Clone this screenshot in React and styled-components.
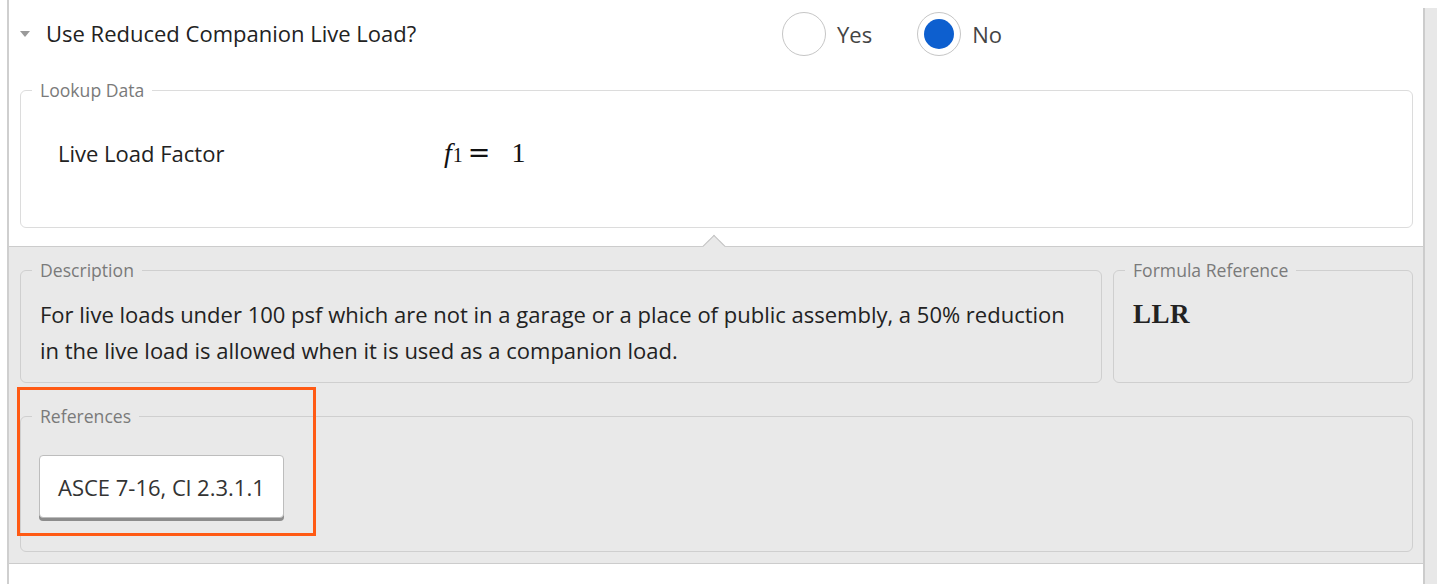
import React from "react";
import styled, { createGlobalStyle } from "styled-components";

const Global = createGlobalStyle`
  html, body { margin: 0; padding: 0; background: #fff; }
  body { font-family: "Open Sans", "Noto Sans", Arial, sans-serif; color: #222; }
  * { box-sizing: border-box; }
`;

const Page = styled.div`
  display: flex;
  align-items: flex-start;
  height: 584px;
  overflow: hidden;
`;

const Panel = styled.div`
  margin-left: 7px;
  width: 1416px;
  min-height: 584px;
  border-left: 2px solid #cfcfcf;
`;

const ScrollTrack = styled.div`
  margin-top: 8px;
  width: 14px;
  height: 576px;
  background: #e8e8e8;
  border-left: 2px solid #cccccc;
`;

const Header = styled.div`
  display: flex;
  align-items: center;
  height: 68px;
  padding-left: 11px;
`;

const Caret = styled.span`
  width: 0;
  height: 0;
  border-left: 5.5px solid transparent;
  border-right: 5.5px solid transparent;
  border-top: 6px solid #9a9a9a;
  margin-right: 16px;
`;

const Title = styled.div`
  font-size: 22px;
  width: 736px;
  color: #222;
  margin-top: -2px;
`;

const RadioGroup = styled.div`
  display: flex;
  align-items: center;
  gap: 45px;
`;

const RadioOption = styled.label`
  display: flex;
  align-items: center;
  gap: 11px;
  font-size: 22px;
  color: #444;
`;

const RadioCircle = styled.span`
  width: 44px;
  height: 44px;
  border-radius: 50%;
  border: 1px solid #c6c6c6;
  background: #fff;
  display: flex;
  align-items: center;
  justify-content: center;
  &::after {
    content: "";
    width: 30px;
    height: 30px;
    border-radius: 50%;
    background: ${(p) => (p.$checked ? "#0d5fcf" : "transparent")};
  }
`;

const WhiteBody = styled.div`
  padding: 11px 10px 18px 11px;
`;

const Fieldset = styled.fieldset`
  margin: 0;
  min-width: 0;
  border: 1px solid ${(p) => (p.$light ? "#dcdcdc" : "#cfcfcf")};
  border-radius: 6px;
  padding: ${(p) => p.$pad || "0 19px"};
`;

const Legend = styled.legend`
  font-size: 17.6px;
  line-height: 22px;
  color: #7a7a7a;
  padding: 0 8px;
  margin-left: -8px;
`;

const LookupRow = styled.div`
  display: flex;
  align-items: center;
  height: 44px;
  padding-left: 18px;
`;

const LookupLabel = styled.div`
  width: 386px;
  font-size: 22px;
  color: #222;
`;

const MathExpr = styled.div`
  font-family: "Liberation Serif", "DejaVu Serif", serif;
  font-size: 28px;
  color: #111;
  display: flex;
  align-items: baseline;
`;

const MathVar = styled.span`
  font-style: italic;
`;

const MathSub = styled.sub`
  font-size: 20px;
  vertical-align: -4px;
  margin-left: 1px;
`;

const MathEq = styled.span`
  font-family: "DejaVu Serif", serif;
  font-size: 27px;
  margin: 0 21px 0 5px;
`;

const GraySection = styled.div`
  position: relative;
  background: #e9e9e9;
  border-top: 1px solid #cccccc;
  border-bottom: 1px solid #cccccc;
  padding: 12px 10px 11px 11px;
  display: flex;
  flex-direction: column;
  gap: 22px;
  &::before {
    content: "";
    position: absolute;
    top: -9px;
    left: 697px;
    width: 15px;
    height: 15px;
    background: #e9e9e9;
    border-top: 1px solid #c4c4c4;
    border-left: 1px solid #c4c4c4;
    transform: rotate(45deg);
  }
`;

const InfoGrid = styled.div`
  display: grid;
  grid-template-columns: 1fr 300px;
  gap: 11px;
`;

const Description = styled.p`
  margin: 0;
  font-size: 22px;
  line-height: 36px;
  color: #222;
`;

const Code = styled.div`
  font-family: "Liberation Serif", "DejaVu Serif", serif;
  font-weight: bold;
  font-size: 27px;
  letter-spacing: 0.5px;
  line-height: 36px;
  color: #222;
`;

const RefButton = styled.button`
  font-family: inherit;
  font-size: 22px;
  color: #333;
  background: #fff;
  border: 1px solid #bdbdbd;
  border-radius: 4px;
  height: 63px;
  padding: 0 18px;
  box-shadow: 0 3px 0 #8c8c8c;
  cursor: pointer;
  margin-left: -1px;
`;

const Highlight = styled.div`
  position: absolute;
  left: 8px;
  top: 140px;
  width: 299px;
  height: 149px;
  border: 3px solid #ff5a14;
  pointer-events: none;
`;

export default function App() {
  return (
    <>
      <Global />
      <Page>
        <Panel>
          <Header>
            <Caret />
            <Title>Use Reduced Companion Live Load?</Title>
            <RadioGroup>
              <RadioOption>
                <RadioCircle />
                Yes
              </RadioOption>
              <RadioOption>
                <RadioCircle $checked />
                No
              </RadioOption>
            </RadioGroup>
          </Header>
          <WhiteBody>
            <Fieldset $light $pad="30px 19px 52px">
              <Legend>Lookup Data</Legend>
              <LookupRow>
                <LookupLabel>Live Load Factor</LookupLabel>
                <MathExpr>
                  <MathVar>f</MathVar>
                  <MathSub>1</MathSub>
                  <MathEq>=</MathEq>
                  <span>1</span>
                </MathExpr>
              </LookupRow>
            </Fieldset>
          </WhiteBody>
          <GraySection>
            <InfoGrid>
              <Fieldset $pad="15px 19px 14px">
                <Legend>Description</Legend>
                <Description>
                  For live loads under 100 psf which are not in a garage or a place of public
                  assembly, a 50% reduction in the live load is allowed when it is used as a
                  companion load.
                </Description>
              </Fieldset>
              <Fieldset $pad="15px 19px 14px">
                <Legend>Formula Reference</Legend>
                <Code>LLR</Code>
              </Fieldset>
            </InfoGrid>
            <Fieldset $pad="28px 19px 33px">
              <Legend>References</Legend>
              <RefButton>ASCE 7-16, Cl 2.3.1.1</RefButton>
            </Fieldset>
            <Highlight />
          </GraySection>
        </Panel>
        <ScrollTrack />
      </Page>
    </>
  );
}
